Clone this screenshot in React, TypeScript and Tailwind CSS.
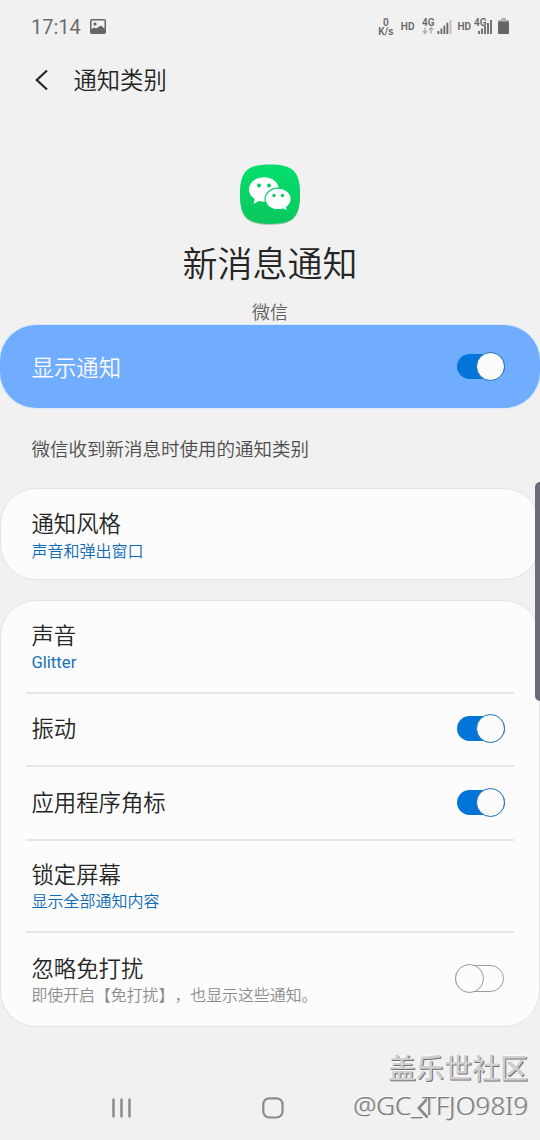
import type { ReactNode } from "react";

interface ToggleProps {
  checked?: boolean;
}

function Toggle({ checked = false }: ToggleProps) {
  if (checked) {
    return (
      <span className="mb-px flex h-[29px] w-12 items-center justify-end rounded-full">
        <span className="-mr-[29px] h-[25px] w-12 rounded-full bg-[#0374d8]" />
        <span className="relative size-[29px] rounded-full border border-[#1c6fb5] bg-[#fcfcfc]" />
      </span>
    );
  }
  return (
    <span className="mr-px mb-1 flex h-[29px] w-[49px] items-center">
      <span className="relative z-10 size-[29px] shrink-0 rounded-full border border-[#999] bg-[#fcfcfc]" />
      <span className="-ml-[29px] h-[27px] w-[49px] shrink-0 rounded-full border border-[#999]" />
    </span>
  );
}

interface RowProps {
  title: string;
  className: string;
  children?: ReactNode;
  control?: ReactNode;
}

function Row({ title, className, children, control }: RowProps) {
  return (
    <div className={`flex items-center justify-between pr-[9px] pl-[5.4px] ${className}`}>
      <div>
        <div className="text-[22.4px] leading-[30px] text-[#252525]">{title}</div>
        {children}
      </div>
      {control}
    </div>
  );
}

function StatusBar() {
  return (
    <div className="flex h-[54px] items-center justify-between px-[31px] text-[#666]">
      <div className="flex items-center gap-[10px]">
        <span className="text-[20px] leading-6 font-normal text-[#6c6c6c]">17:14</span>
        <svg width="16" height="15" viewBox="0 0 16 15" className="-mt-px -ml-px">
          <rect x="0.75" y="0.75" width="14.5" height="13.5" rx="1" fill="none" stroke="#666" strokeWidth="1.5" />
          <circle cx="5" cy="5" r="1.6" fill="#666" />
          <path d="M1 10.5l3-2 2 1L11 6.5l4 3.5v4H1z" fill="#666" />
        </svg>
      </div>
      <div className="flex items-center text-[10px] font-semibold">
        <div className="w-4 text-center text-[10px] leading-[9.5px]">
          <div>0</div>
          <div>K/s</div>
        </div>
        <span className="ml-[7px] leading-3">HD</span>
        <svg width="31" height="18" viewBox="0 0 31 18" className="ml-2">
          <text x="0" y="8" fontSize="10" fill="#666">4G</text>
          <path d="M3 9.5v6M1 13l2 2.5L5 13M9 15.5v-6M7 12l2-2.5 2 2.5" stroke="#aaa" strokeWidth="1.3" fill="none" />
          <path d="M16.4 16v-3M19.4 16v-5.5M22.4 16V7.5M25.4 16V4.8" stroke="#666" strokeWidth="1.8" />
          <path d="M28.5 16V2" stroke="#bbb" strokeWidth="1.8" />
        </svg>
        <span className="ml-1 leading-3">HD</span>
        <svg width="19" height="18" viewBox="0 0 19 18" className="ml-[3px]">
          <text x="0" y="8" fontSize="10" fill="#666">4G</text>
          <path d="M5 16v-3M8 16v-5.5M11 16V8M14 16V5M17 16V2" stroke="#666" strokeWidth="1.8" />
        </svg>
        <svg width="11" height="16" viewBox="0 0 11 16" className="mb-0.5 ml-[5px]">
          <path d="M3 0h5v2h3v2H0V2h3z" fill="#b5b5b5" />
          <rect y="3.5" width="11" height="12.5" rx="1" fill="#666" />
        </svg>
      </div>
    </div>
  );
}

function WeChatIcon() {
  return (
    <svg width="62" height="64" viewBox="0 0 62 64">
      <defs>
        <linearGradient id="wechat" x1="0" y1="0" x2="0" y2="1">
          <stop offset="0" stopColor="#05df6d" />
          <stop offset="1" stopColor="#0bc75e" />
        </linearGradient>
      </defs>
      <path d="M31 2.5C54 2.5 61 9.5 61 32.3S54 62 31 62 1 55 1 32.3 8 2.5 31 2.5z" fill="#a9c9b5" />
      <path d="M31 1.5C54 1.5 61 8.5 61 31.3S54 61 31 61 1 54 1 31.3 8 1.5 31 1.5z" fill="url(#wechat)" />
      <path d="M25 14.3c-8.500 0-15 5.400-15 12.300 0 4 2.100 7.200 5.700 9.500L14.600 41l5.200-3c5 1.200 10 .9 14-1.200 4-2.100 6.200-6 6.200-10.200 0-6.900-6.600-12.300-15-12.300z" fill="#fff" />
      <path d="M39 25.2c7.400 0 13.200 4.900 13.200 10.900 0 3.300-1.700 6.200-4.600 8.200l.9 4-4.600-2.300c-1.500.5-3.200.7-4.900.7-7.300 0-13-4.700-13-10.600s5.700-10.900 13-10.900z" fill="#fff" stroke="#05d268" strokeWidth="1.2" />
      <g fill="#08cd61">
        <circle cx="20" cy="22.5" r="2" />
        <circle cx="30" cy="22.5" r="2" />
        <circle cx="35" cy="32.5" r="1.7" />
        <circle cx="43.5" cy="32.5" r="1.7" />
      </g>
    </svg>
  );
}

function NavigationBar() {
  return (
    <div className="flex h-[64px] items-center pl-[112px] text-[#8b8b8b]">
      <svg width="20" height="20" viewBox="0 0 20 20" stroke="currentColor" strokeWidth="2.5" strokeLinecap="round">
        <path d="M1.5 1.5v17M9.5 1.5v17M17.5 1.5v17" />
      </svg>
      <svg width="22" height="22" viewBox="0 0 22 22" className="ml-[130px]" fill="none" stroke="currentColor" strokeWidth="2.2">
        <rect x="1.3" y="1.3" width="19.2" height="19.2" rx="6" />
      </svg>
      <svg width="12" height="22" viewBox="0 0 12 22" className="ml-[133px]" fill="none" stroke="currentColor" strokeWidth="2.6">
        <path d="M10.5 1.5L1.8 11l8.7 9.5" />
      </svg>
    </div>
  );
}

export default function App() {
  return (
    <div className="relative flex h-[1140px] w-[540px] flex-col overflow-hidden bg-[#f1f1f1] font-[Roboto,'Noto_Sans_CJK_SC',sans-serif] font-[350] [text-spacing-trim:space-all]">
      <StatusBar />

      <header className="flex h-[52px] items-center pl-[35px]">
        <svg width="14" height="22" viewBox="0 0 14 22" fill="none" stroke="#252525" strokeWidth="2.2">
          <path d="M12 1.5L1.8 11 12 20.5" />
        </svg>
        <h1 className="mt-0.5 ml-[24.5px] text-[23.3px] leading-8 font-[350] text-[#252525]">通知类别</h1>
      </header>

      <section className="flex h-[219px] flex-col items-center pt-[57px]">
        <WeChatIcon />
        <h2 className="mt-[14px] text-[35px] leading-[50px] font-[350] text-[#252525]">新消息通知</h2>
        <p className="mt-2.5 text-[18px] leading-6 text-[#606060]">微信</p>
      </section>

      <div className="flex h-[83px] shrink-0 items-center justify-between rounded-[36px] bg-[#70adff] pr-[35px] pl-[31.5px] shadow-[0_0_0_1px_#dcebfb]">
        <span className="mt-0.5 text-[22.4px] leading-[30px] text-[#fafaff]">显示通知</span>
        <Toggle checked />
      </div>

      <p className="flex h-[80px] items-center pt-1.5 pl-[31.5px] text-[18.5px] text-[#4c4c4c]">微信收到新消息时使用的通知类别</p>

      <div className="h-[92px] shrink-0 rounded-[36px] border border-[#e3e3e3] bg-[#fcfcfc] px-[25px]">
        <Row title="通知风格" className="h-[90px] pt-1">
          <div className="text-[16px] leading-[25px] text-[#0f6ab5]">声音和弹出窗口</div>
        </Row>
      </div>

      <div className="mt-5 h-[427px] shrink-0 divide-y-2 divide-[#e6e6e6] rounded-[36px] border border-[#e3e3e3] bg-[#fcfcfc] px-[25px]">
        <Row title="声音" className="h-[93px] pt-[3px]">
          <div className="text-[16.7px] leading-[24px] font-normal text-[#1470b8]">Glitter</div>
        </Row>
        <Row title="振动" className="h-[73px] pb-px" control={<Toggle checked />} />
        <Row title="应用程序角标" className="h-[74px]" control={<Toggle checked />} />
        <Row title="锁定屏幕" className="h-[92px] pt-0.5">
          <div className="text-[16px] leading-6 text-[#0f6ab5]">显示全部通知内容</div>
        </Row>
        <Row title="忽略免打扰" className="h-[93px] pt-0.5" control={<Toggle />}>
          <div className="text-[15.9px] leading-6 text-[#8c8c8c]">即使开启【免打扰】，也显示这些通知。</div>
        </Row>
      </div>

      <div className="mt-auto">
        <NavigationBar />
      </div>

      {/* edge panel handle */}
      <div className="absolute top-[482px] right-0 h-[219px] w-[5px] rounded-l-[5px] bg-[#6c6a78]" />

      <div className="absolute top-[1051px] right-[12px] text-right whitespace-nowrap">
        <div className="text-[28px] leading-[38px] font-medium text-[#cfcfcf] [text-shadow:1px_1px_0_#707070,-1px_-1px_0_#fafafa]">盖乐世社区</div>
        <div className="font-['Noto_Sans'] text-[26px] leading-[32px] font-light text-[#7c7c7c] [text-shadow:-1px_-1px_0_#fafafa,1px_0_0_#c8c8c8]">@GC_TFJO98I9</div>
      </div>
    </div>
  );
}
